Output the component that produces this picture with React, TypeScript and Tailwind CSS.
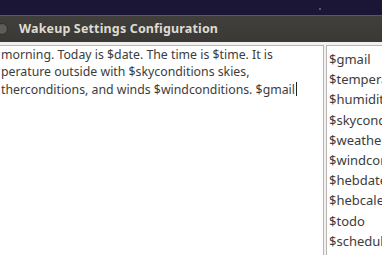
const lines = [
  "morning. Today is $date. The time is $time. It is",
  "perature outside with $skyconditions skies,",
  "therconditions, and winds $windconditions. $gmail",
];

const tags = [
  "$gmail",
  "$temperature",
  "$humidity",
  "$skyconditions",
  "$weatherconditions",
  "$windconditions",
  "$hebdate",
  "$hebcalendar",
  "$todo",
  "$schedule",
];

export default function App() {
  return (
    <div className="relative h-[255px] w-[382px] overflow-hidden bg-[#1b1636] font-['Noto_Sans',sans-serif]">
      <span className="absolute left-[319px] top-[8px] h-[2px] w-[2px] bg-[#5a5580]" />
      {/* window sits partly off the left edge of the screen */}
      <div className="absolute left-[-40px] top-[15px] flex h-[240px] w-[460px] flex-col">
        <div className="flex h-[27px] shrink-0 items-center border-t border-[#5b5a55] bg-gradient-to-b from-[#403f3b] to-[#3a3935]">
          <div className="ml-[36px] h-[12px] w-[12px] rounded-full border border-[#2f2e2b] bg-[#5d5c57]" />
          <span className="ml-[11px] text-[12.5px] font-bold tracking-[0.15px] text-[#dfdbd2]">
            Wakeup Settings Configuration
          </span>
        </div>
        <div className="flex min-h-0 flex-1 gap-[2px] bg-[#f2f1f0] pt-[3px]">
          <div className="w-[364px] shrink-0 border border-b-0 border-[#b8b6b2] bg-white pl-[40px] pt-0 text-[12.3px] leading-[17px] text-[#3c3c3c]">
            {lines.map((l, i) => (
              <div key={i} className="whitespace-nowrap">
                {l}
                {i === lines.length - 1 && (
                  <span className="ml-[1px] inline-block h-[14px] w-[1px] translate-y-[2px] bg-[#222]" />
                )}
              </div>
            ))}
          </div>
          <div className="min-w-0 flex-1 overflow-hidden border border-b-0 border-[#b8b6b2] bg-white pl-[2px] pt-[3px] text-[13px] leading-[20.2px] text-[#3c3c3c]">
            {tags.map((t) => (
              <div key={t} className="whitespace-nowrap">
                {t}
              </div>
            ))}
          </div>
        </div>
      </div>
    </div>
  );
}
